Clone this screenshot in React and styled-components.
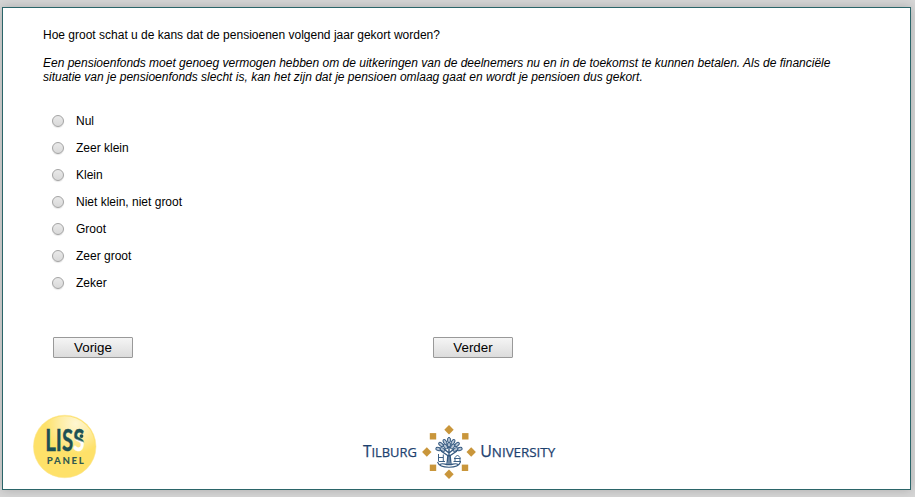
import React from 'react';
import styled, { createGlobalStyle } from 'styled-components';

const GlobalStyle = createGlobalStyle`
  * { box-sizing: border-box; }
  body {
    margin: 0;
    background: #d6d6d6;
    font: 12px/14px "Liberation Sans", Arial, sans-serif;
    color: #000;
    overflow: hidden;
  }
`;

const Page = styled.div`
  height: 497px;
  padding: 7px 4px 7px 2px;
`;

const Panel = styled.main`
  height: 483px;
  border: 1px solid #2b6569;
  background: #fff;
  box-shadow: 0 0 10px rgba(0, 0, 0, 0.2);
  padding: 20px 40px 0;
  display: flex;
  flex-direction: column;
`;

const Question = styled.p`
  margin: 0 0 14px;
`;

const Explanation = styled.p`
  margin: 0;
  width: 800px;
  font-style: italic;
`;

const Options = styled.div`
  margin: 23px 0 0 9px;
  display: flex;
  flex-direction: column;
`;

const Option = styled.label`
  display: flex;
  align-items: center;
  gap: 12px;
  height: 27px;
`;

const Radio = styled.input.attrs({ type: 'radio', name: 'chance' })`
  appearance: none;
  width: 12px;
  height: 12px;
  margin: 0;
  border: 1px solid #a3a3a3;
  border-radius: 50%;
  background: linear-gradient(#e9e9e9, #d9d9d9);
  box-shadow: 0 1px 1px rgba(0, 0, 0, 0.1);
  &:checked { background: radial-gradient(#444 30%, #e2e2e2 36%); }
`;

const Buttons = styled.div`
  margin: 41px 0 0 10px;
  display: flex;
  gap: 300px;
`;

const Button = styled.button`
  width: 80px;
  height: 21px;
  padding: 0;
  border: 1px solid #999;
  border-radius: 1px;
  background: linear-gradient(#f5f5f5, #dcdcdc);
  font: 13.333px/17px "Liberation Sans", Arial, sans-serif;
  color: #000;
`;

const Logos = styled.footer`
  margin: 56px 0 0 -11px;
  display: flex;
  align-items: flex-start;
`;

const LissSvg = styled.svg`
  width: 66px;
  height: 66px;
  flex: none;
`;

const TilburgSvg = styled.svg`
  width: 200px;
  height: 60px;
  margin: 8px 0 0 261px;
  flex: none;
`;

function LissLogo() {
  return (
    <LissSvg viewBox="32 414 66 66" role="img" aria-label="LISS Panel">
      <defs>
        <radialGradient id="shine" cx="0.68" cy="0.12" r="0.5">
          <stop offset="0" stopColor="#fff" stopOpacity="0.7" />
          <stop offset="0.5" stopColor="#fff" stopOpacity="0.4" />
          <stop offset="1" stopColor="#fff" stopOpacity="0" />
        </radialGradient>
        <linearGradient id="lastLetter" gradientUnits="userSpaceOnUse" x1="78" y1="439" x2="77.4" y2="440.6">
          <stop offset="0" stopColor="#1d5054" />
          <stop offset="1" stopColor="#fff" />
        </linearGradient>
      </defs>
      <circle cx="64.7" cy="446.5" r="31.3" fill="#fee169" stroke="#fbe492" strokeWidth="0.5" />
      <circle cx="64.7" cy="446.5" r="30.3" fill="url(#shine)" />
      <g fontFamily="Lato, sans-serif" fill="#1d5054">
        <text x="45.2" y="450.9" fontSize="30.5" fontWeight="700" textLength="39.2" lengthAdjust="spacingAndGlyphs" stroke="#1d5054" strokeWidth="0.4">
          LIS<tspan fill="url(#lastLetter)" stroke="url(#lastLetter)">S</tspan>
        </text>
        <text x="46.8" y="463.5" textLength="37" fontSize="9.6" fontWeight="900" fill="#325a50">PANEL</text>
      </g>
      <circle cx="81.5" cy="436.1" r="1.9" fill="#1d5054" />
    </LissSvg>
  );
}

const diamonds = [[449, 429.8], [449, 474.3], [426.8, 452], [471.2, 452]];
const squares = [[433, 436.3], [465.3, 436.3], [433, 467.8], [465, 467.8]];
const leaves = [
  [449, 440, 0], [445, 442, -30], [453, 442, 30], [441, 444.5, -50],
  [457, 444.5, 50], [445.5, 446.5, -40], [452.7, 446.5, 40], [438.5, 449, -75],
  [459.5, 449, 75], [442.6, 449.5, -65], [455.4, 449.5, 65], [449, 445, 0],
];

function TilburgLogo() {
  return (
    <TilburgSvg viewBox="359 422 200 60" role="img" aria-label="Tilburg University">
      <g fill="#c9963b">
        {diamonds.map(([x, y]) => (
          <path key={`${x}-${y}`} d={`M${x} ${y - 4.7}l4.7 4.7l-4.7 4.7l-4.7 -4.7z`} />
        ))}
        {squares.map(([x, y]) => (
          <rect key={`${x}-${y}`} x={x - 3.2} y={y - 3.2} width="6.4" height="6.4" />
        ))}
      </g>
      <g fill="none" stroke="#33587f" strokeWidth="0.95">
        {leaves.map(([x, y, angle]) => (
          <ellipse key={`${x}-${y}`} cx={x} cy={y} rx="1.5" ry="2.7" transform={`rotate(${angle} ${x} ${y})`} fill="#b7c5d5" />
        ))}
        <path d="M449 446V464M449 453L444 449M449 453L454 449M448.5 456L441 451M449.5 456L457 451" strokeWidth="1.4" />
        <path d="M447.9 455L447 464M450.1 455L451 464" strokeWidth="1.3" />
        <path d="M438.5 454V461.5M438.5 457.5H443M443.3 454.5V461.5M439 461.5H445M455 461.5V457.5L457.5 455L460 457.5V461.5M454 458.5H460.5M453.5 461.5H461" />
        <path d="M437.5 462C440 469 458 469 460.5 462M440 464.5C443 462 446 465.5 449 464.5C452 465.5 455 462 458 464.5" strokeWidth="1.1" />
      </g>
      <g fill="#1e426f" stroke="#1e426f" strokeWidth="0.25" fontFamily='"Open Sans", "Noto Sans", sans-serif'>
        <text x="362.9" y="457" fontSize="16" textLength="54" lengthAdjust="spacingAndGlyphs">T<tspan fontSize="13.4">ILBURG</tspan></text>
        <text x="480.2" y="457" fontSize="16" textLength="75" lengthAdjust="spacingAndGlyphs">U<tspan fontSize="13.4">NIVERSITY</tspan></text>
      </g>
    </TilburgSvg>
  );
}

const answers = ['Nul', 'Zeer klein', 'Klein', 'Niet klein, niet groot', 'Groot', 'Zeer groot', 'Zeker'];

export default function App() {
  return (
    <Page>
      <GlobalStyle />
      <Panel>
        <Question>Hoe groot schat u de kans dat de pensioenen volgend jaar gekort worden?</Question>
        <Explanation>
          Een pensioenfonds moet genoeg vermogen hebben om de uitkeringen van de deelnemers nu en in de toekomst te kunnen betalen. Als de financiële situatie van je pensioenfonds slecht is, kan het zijn dat je pensioen omlaag gaat en wordt je pensioen dus gekort.
        </Explanation>
        <Options role="radiogroup">
          {answers.map((answer) => (
            <Option key={answer}><Radio value={answer} />{answer}</Option>
          ))}
        </Options>
        <Buttons>
          <Button type="button">Vorige</Button>
          <Button type="button">Verder</Button>
        </Buttons>
        <Logos>
          <LissLogo />
          <TilburgLogo />
        </Logos>
      </Panel>
    </Page>
  );
}
